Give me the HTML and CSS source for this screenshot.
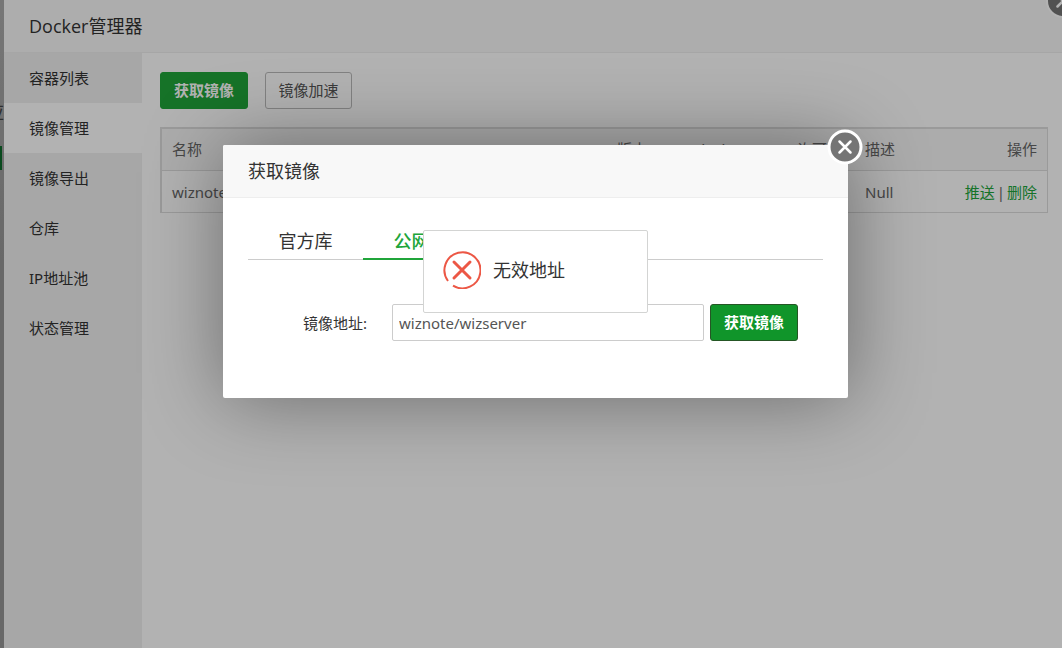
FILE: index.html
```html
<!DOCTYPE html>
<html lang="zh-CN">
<head>
<meta charset="utf-8">
<title>Docker管理器</title>
<link rel="stylesheet" href="styles.css">
</head>
<body>
<div class="page">
  <div class="host" aria-hidden="true"><span class="host-text">应</span><span class="host-button"></span></div>
  <section class="manager">
    <h1 class="title-bar">Docker管理器</h1>
    <div class="manager-body">
      <nav class="side-menu">
        <a href="#">容器列表</a>
        <a href="#" class="current">镜像管理</a>
        <a href="#">镜像导出</a>
        <a href="#">仓库</a>
        <a href="#">IP地址池</a>
        <a href="#">状态管理</a>
      </nav>
      <main class="content">
        <div class="toolbar">
          <button type="button" class="btn btn-success">获取镜像</button>
          <button type="button" class="btn btn-default">镜像加速</button>
        </div>
        <div class="table-wrap">
          <table>
            <colgroup><col class="c-name"><col class="c-version"><col class="c-id"><col class="c-license"><col class="c-desc"><col></colgroup>
            <thead><tr><th>名称</th><th>版本</th><th>docker</th><th>许可</th><th>描述</th><th class="right">操作</th></tr></thead>
            <tbody><tr><td>wiznote/wizserver</td><td></td><td></td><td></td><td>Null</td><td class="right"><a href="#">推送</a><span class="sep">|</span><a href="#">删除</a></td></tr></tbody>
          </table>
        </div>
      </main>
    </div>
    <button type="button" class="close close-outer" aria-label="关闭管理器">
      <svg viewBox="0 0 36 36"><circle class="disc" cx="18" cy="18" r="16"/><path class="cross" d="M12.500 12.500L23.500 23.500M23.500 12.500L12.500 23.500"/></svg>
    </button>
  </section>
  <div class="shade"></div>
  <section class="dialog" role="dialog" aria-labelledby="dialog-title">
    <h2 class="title-bar" id="dialog-title">获取镜像</h2>
    <div class="dialog-body">
      <div class="tabs" role="tablist">
        <button type="button" role="tab" aria-selected="false">官方库</button>
        <button type="button" role="tab" aria-selected="true">公网库</button>
      </div>
      <form class="form-row">
        <label for="address">镜像地址:</label>
        <input id="address" type="text" value="wiznote/wizserver">
        <button type="button" class="btn btn-success pressed">获取镜像</button>
      </form>
    </div>
    <button type="button" class="close close-inner" aria-label="关闭">
      <svg viewBox="0 0 36 36"><circle class="disc" cx="18" cy="18" r="16"/><path class="cross" d="M12.500 12.500L23.500 23.500M23.500 12.500L12.500 23.500"/></svg>
    </button>
    <div class="message" role="alert">
      <svg class="error-icon" viewBox="0 0 38 38"><path class="ring" d="M5 30A18 18 0 1 1 10 34.600"/><path class="mark" d="M11 11L27 27M27 11L11 27"/></svg>
      <span>无效地址</span>
    </div>
  </section>
</div>
</body>
</html>
```
FILE: styles.css
```css
* { box-sizing: border-box; }
body {
  margin: 0;
  font: 15px/20px "Noto Sans", "Noto Sans CJK SC", sans-serif;
  color: #666;
}
a { text-decoration: none; }
button, input { font: inherit; }
h1, h2 { margin: 0; font-weight: 400; }
.page { position: relative; display: flex; min-height: 100vh; overflow: hidden; }
.host { position: relative; width: 4px; flex: none; overflow: hidden; background: linear-gradient(#aaa, #969696 40%, #969696); }
.host-text { position: absolute; right: 0; top: 102px; font-size: 18px; color: #444; }
.host-button { position: absolute; left: 0; top: 146px; width: 2px; height: 24px; background: #0d6b2c; }
.manager { position: relative; display: flex; flex-direction: column; flex: 1; background: #fff; }
.title-bar {
  height: 53px;
  padding: 0 25px;
  border-bottom: 1px solid #eee;
  background: #f8f8f8;
  color: #333;
  font-family: "Open Sans", "Noto Sans CJK SC", sans-serif;
  font-size: 18px;
  line-height: 52px;
}
.manager-body { display: flex; flex: 1; }
.side-menu { width: 138px; flex: none; background: #f0f0f0; }
.side-menu a { display: block; padding: 0 25px; line-height: 50px; color: #333; }
.side-menu .current { background: #fff; }
.content { flex: 1; min-width: 0; padding: 19px 14px 19px 18px; }
.toolbar { display: flex; gap: 17px; margin-bottom: 18px; }
.btn { height: 37px; padding: 0 12px; border: 1px solid #20a53a; border-radius: 3px; line-height: 35px; white-space: nowrap; }
.btn-success { width: 88px; background: #20a53a; color: #fff; font-weight: 700; }
.btn-default { width: 87px; border-color: #bbb; background: #fff; color: #555; }
.pressed { background: #10952a; border-color: #255625; }
.table-wrap { border: 1px solid #ddd; border-right: 0; border-bottom: 0; }
table { width: 100%; border: 1px solid #ddd; border-spacing: 0; table-layout: fixed; }
th, td { padding: 0 10px; font-weight: 400; text-align: left; white-space: nowrap; }
th { height: 42px; padding-bottom: 2px; background: #f6f6f6; border-bottom: 1px solid #ddd; }
td { height: 41px; }
.right { text-align: right; }
.sep { padding: 0 2px; }
td a { color: #20a53a; }
.c-name { width: 445px; }
.c-version { width: 79px; }
.c-id { width: 101px; }
.c-license { width: 68px; }
.c-desc { width: 90px; }
.shade { position: absolute; inset: 0; background: rgba(0, 0, 0, .3); }
.dialog {
  position: absolute;
  left: 223px;
  top: 145px;
  width: 625px;
  border-radius: 2px;
  background: #fff;
  box-shadow: 1px 1px 80px rgba(0, 0, 0, .4);
}
.dialog .title-bar { border-radius: 2px 2px 0 0; }
.dialog-body { padding: 25px 25px 57px; }
.tabs { display: flex; height: 37px; border-bottom: 1px solid #ccc; }
.tabs button { width: 115px; height: 37px; padding: 0; border: 0; border-bottom: 2px solid transparent; background: none; color: #333; font-size: 18px; }
.tabs [aria-selected="true"] { border-color: #20a53a; color: #20a53a; font-weight: 500; }
.form-row { display: flex; align-items: center; margin-top: 44px; }
.form-row label { width: 119px; margin-right: 25px; color: #333; text-align: right; }
.form-row input { width: 312px; height: 37px; margin-right: 6px; padding: 0 6px; border: 1px solid #ccc; border-radius: 2px; color: #555; outline: 0; }
.close { position: absolute; width: 36px; height: 36px; padding: 0; border: 0; border-radius: 50%; background: none; }
.close svg { display: block; width: 36px; height: 36px; }
.close-inner { right: -15px; top: -16px; }
.close-outer { right: -19px; top: -17px; }
.disc { fill: #757575; stroke: #fff; stroke-width: 3; }
.close-outer .disc { stroke: #fff; stroke-width: 2; }
.cross { fill: none; stroke: #fff; stroke-width: 2.500; stroke-linecap: round; }
.message {
  position: absolute;
  left: 200px;
  top: 85px;
  display: flex;
  align-items: center;
  gap: 12px;
  width: 225px;
  height: 83px;
  padding: 0 19px 3px;
  border: 1px solid #d3d4d3;
  border-radius: 2px;
  background: #fff;
  color: #333;
  font-size: 18px;
}
.error-icon { width: 38px; height: 38px; }
.error-icon path { fill: none; stroke: #ec5745; }
.error-icon .ring { stroke-width: 2; }
.error-icon .mark { stroke-width: 3; stroke-linecap: round; }
```
